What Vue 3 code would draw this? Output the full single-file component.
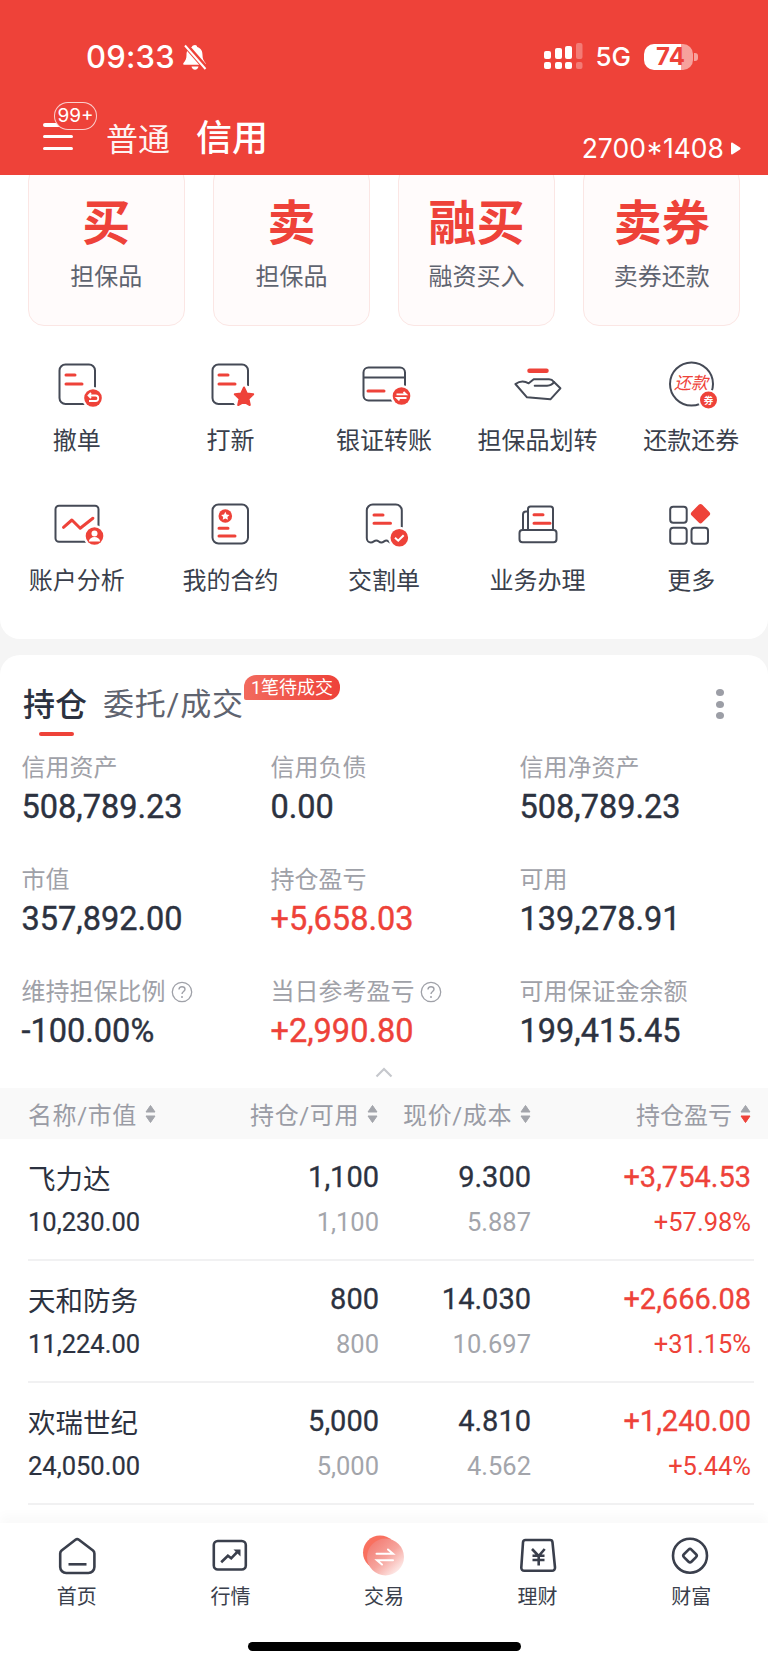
<script setup>
const cards = [
  { title: '买', sub: '担保品' },
  { title: '卖', sub: '担保品' },
  { title: '融买', sub: '融资买入' },
  { title: '卖券', sub: '卖券还款' },
]
const stats = [
  { label: '信用资产', value: '508,789.23' },
  { label: '信用负债', value: '0.00' },
  { label: '信用净资产', value: '508,789.23' },
  { label: '市值', value: '357,892.00' },
  { label: '持仓盈亏', value: '+5,658.03', up: true },
  { label: '可用', value: '139,278.91' },
  { label: '维持担保比例', value: '-100.00%', help: true },
  { label: '当日参考盈亏', value: '+2,990.80', up: true, help: true },
  { label: '可用保证金余额', value: '199,415.45' },
]
const heads = [
  { label: '名称/市值', cls: 'start slash' },
  { label: '持仓/可用', cls: 'slash' },
  { label: '现价/成本', cls: 'slash' },
  { label: '持仓盈亏', active: true },
]
const rows = [
  { name: '飞力达', value: '10,230.00', qty: '1,100', avail: '1,100', price: '9.300', cost: '5.887', pl: '+3,754.53', pct: '+57.98%' },
  { name: '天和防务', value: '11,224.00', qty: '800', avail: '800', price: '14.030', cost: '10.697', pl: '+2,666.08', pct: '+31.15%' },
  { name: '欢瑞世纪', value: '24,050.00', qty: '5,000', avail: '5,000', price: '4.810', cost: '4.562', pl: '+1,240.00', pct: '+5.44%' },
]
</script>

<template>
  <div class="page">
    <header class="top">
      <div class="status">
        <div class="clock">
          <span class="time">09:33</span>
          <svg class="bell" width="26" height="28" viewBox="0 0 26 28">
            <path d="M13 2c1.300 0 2 .9 2.200 1.900C19 5 20.500 8 20.500 12c0 3.500 1 5.500 3 8 .6.800.2 1.800-.8 1.800H2.300c-1 0-1.400-1-.8-1.800 2-2.500 3-4.500 3-8 0-4 1.500-7 5.300-8.100C10 2.900 11.700 2 13 2z" fill="#fff"/>
            <path d="M9.500 23.500h7c-.3 2-1.700 3.200-3.500 3.200s-3.200-1.200-3.500-3.200z" fill="#fff"/>
            <path d="M3 1.500 24.500 26" stroke="#EE4239" stroke-width="5.500"/>
            <path d="M3 2.500 23.500 26" stroke="#fff" stroke-width="2"/>
          </svg>
        </div>
        <div class="sys">
          <svg width="40" height="28" viewBox="0 0 40 28">
            <g fill="#fff">
              <rect x="0" y="8" width="7" height="8" rx="2"/>
              <rect x="11" y="5" width="7" height="11" rx="2"/>
              <rect x="21" y="3" width="7" height="13" rx="2"/>
              <rect x="0" y="19" width="7" height="7" rx="2"/>
              <rect x="11" y="19" width="7" height="7" rx="2"/>
              <rect x="21" y="19" width="7" height="7" rx="2"/>
            </g>
            <g fill="#fff" opacity=".3">
              <rect x="32" y="0" width="6.500" height="16" rx="2"/>
              <rect x="32" y="19" width="6.500" height="7" rx="2"/>
            </g>
          </svg>
          <span class="net">5G</span>
          <div class="battery">
            <div class="cell"><span>74</span></div>
            <i class="nub"></i>
          </div>
        </div>
      </div>
      <div class="topnav">
        <div class="menu">
          <i></i><i></i><i></i>
          <span class="msg">99+</span>
        </div>
        <span class="mode">普通</span>
        <span class="mode on">信用</span>
        <span class="quote">2700*1408</span>
        <svg class="tri" width="11" height="13" viewBox="0 0 11 13"><path d="M1 1.500C1 .5 1.800.2 2.600.7l7.400 4.700c.7.500.7 1.500 0 2l-7.400 4.900c-.8.500-1.600.2-1.600-.8z" fill="#fff"/></svg>
      </div>
    </header>

    <section class="ops">
      <div class="cards">
        <div v-for="c in cards" :key="c.sub" class="card">
          <div class="card-title">{{ c.title }}</div>
          <div class="card-sub">{{ c.sub }}</div>
        </div>
      </div>
      <div class="tools">
        <div class="tool">
          <svg width="60" height="60" viewBox="0 0 60 60">
            <rect class="ln" x="12.500" y="8.500" width="35.500" height="39.500" rx="6"/>
            <path class="bar" d="M19 19h9M19 28h16"/>
            <circle cx="46" cy="42" r="11" fill="#fff"/><circle class="dot" cx="46" cy="42" r="8.800"/>
            <path d="M42 39.500h6.500a2.700 2.700 0 0 1 0 5.500H42M44 37l-2.500 2.500L44 42" fill="none" stroke="#fff" stroke-width="1.800"/>
          </svg>
          <span>撤单</span>
        </div>
        <div class="tool">
          <svg width="60" height="60" viewBox="0 0 60 60">
            <rect class="ln" x="12.500" y="8.500" width="35.500" height="39.500" rx="6"/>
            <path class="bar" d="M19 19h9M19 28h16"/>
            <circle cx="44" cy="41" r="12" fill="#fff"/>
            <path class="dot" stroke="#EE4239" stroke-width="2" stroke-linejoin="round" d="M44 31.500l2.800 6 6.400.8-4.700 4.400 1.300 6.300-5.800-3.200-5.800 3.200 1.300-6.300-4.700-4.400 6.400-.8z"/>
          </svg>
          <span>打新</span>
        </div>
        <div class="tool">
          <svg width="60" height="60" viewBox="0 0 60 60">
            <rect class="ln" x="9.500" y="11.500" width="41.500" height="33" rx="5"/>
            <path class="ln" d="M9.500 21.500H51"/>
            <path class="bar" d="M14 35h16"/>
            <circle cx="47.500" cy="40" r="11" fill="#fff"/><circle class="dot" cx="47.500" cy="40" r="8.800"/>
            <path d="M42.500 38.300h9.500l-2.500-2.300M52.500 42h-9.500l2.500 2.300" fill="none" stroke="#fff" stroke-width="1.800"/>
          </svg>
          <span>银证转账</span>
        </div>
        <div class="tool">
          <svg width="60" height="60" viewBox="0 0 60 60">
            <path class="bar thick" d="M21.500 14.700h17"/>
            <path class="ln" stroke-linecap="round" stroke-linejoin="round" d="M7.400 28Q14 23.500 20.700 27.300L25.700 23.300H41Q44 23.300 46 26L52.400 32.300 42.400 43.300 19 41.300Z"/>
            <path class="ln" stroke-linecap="round" d="M26.700 29.700H39Q44 29.500 46 26"/>
          </svg>
          <span>担保品划转</span>
        </div>
        <div class="tool">
          <svg width="60" height="60" viewBox="0 0 60 60">
            <circle class="ln" cx="30.500" cy="28" r="21.500"/>
            <text x="30" y="33" class="coin">还款</text>
            <circle cx="47.500" cy="44" r="10.500" fill="#fff"/><circle class="dot" cx="47.500" cy="44" r="8.500"/>
            <text x="47.500" y="47.500" class="coin-sm">券</text>
          </svg>
          <span>还款还券</span>
        </div>
        <div class="tool">
          <svg width="60" height="60" viewBox="0 0 60 60">
            <rect class="ln" x="8.500" y="9.800" width="43" height="36" rx="3.500"/>
            <path class="bar" stroke-linejoin="round" d="M16.500 31.300 24.900 24l8.300 8.300 12.700-10"/>
            <circle cx="47.500" cy="40" r="11" fill="#fff"/><circle class="dot" cx="47.500" cy="40" r="8.800"/>
            <circle cx="47.500" cy="37.500" r="3" fill="#fff"/>
            <path d="M41.800 45.500c.5-3 2.800-4.500 5.700-4.500s5.200 1.500 5.700 4.500z" fill="#fff"/>
          </svg>
          <span>账户分析</span>
        </div>
        <div class="tool">
          <svg width="60" height="60" viewBox="0 0 60 60">
            <rect class="ln" x="12.500" y="8.500" width="35.500" height="39" rx="6"/>
            <circle class="dot" cx="25.300" cy="20" r="6.800"/>
            <path d="M25.300 15.800l1.300 2.700 2.900.4-2.100 2 .5 2.900-2.600-1.400-2.600 1.400.5-2.900-2.100-2 2.900-.4z" fill="#fff"/>
            <path class="bar" d="M19 32.300h9M19 40h16"/>
          </svg>
          <span>我的合约</span>
        </div>
        <div class="tool">
          <svg width="60" height="60" viewBox="0 0 60 60">
            <path class="ln" d="M12.800 42V14.500a6 6 0 0 1 6-6h23a6 6 0 0 1 6 6V36M12.800 42c0 3 2 4.500 4 4.500 3 0 3-2 5.500-2s2.500 2 5 2 3-2 5-2 2.500 2 4.500 2"/>
            <path class="bar" d="M20 19h9M20 27.300h16.500"/>
            <circle cx="45.300" cy="41.700" r="11" fill="#fff"/><circle class="dot" cx="45.300" cy="41.700" r="8.800"/>
            <path d="M41 41.700l3.200 3 5.500-5.500" fill="none" stroke="#fff" stroke-width="2"/>
          </svg>
          <span>交割单</span>
        </div>
        <div class="tool">
          <svg width="60" height="60" viewBox="0 0 60 60">
            <path class="ln" d="M20 34V13a2.500 2.500 0 0 1 2.500-2.500h20a2.500 2.500 0 0 1 2.500 2.500v21"/>
            <path class="ln" d="M15 34V18.500a3 3 0 0 1 3-3h2"/>
            <rect class="ln" x="11.500" y="34" width="37" height="12.300" rx="3"/>
            <path class="bar" d="M26 18.700h9M26 27.300h16"/>
          </svg>
          <span>业务办理</span>
        </div>
        <div class="tool">
          <svg width="60" height="60" viewBox="0 0 60 60">
            <rect class="ln" x="9.200" y="10.700" width="16.500" height="16" rx="3"/>
            <rect class="ln" x="9.200" y="31.700" width="16.500" height="16" rx="3"/>
            <rect class="ln" x="30.500" y="31.700" width="16.500" height="16" rx="3"/>
            <rect class="dot" x="32" y="10.200" width="15" height="15" rx="2.500" transform="rotate(45 39.500 17.700)"/>
          </svg>
          <span>更多</span>
        </div>
      </div>
    </section>

    <section class="panel">
      <div class="tabs">
        <div class="tab-on">
          <span>持仓</span>
          <i></i>
        </div>
        <span class="tab">委托/成交</span>
        <span class="pending">1笔待成交</span>
        <div class="more"><i></i><i></i><i></i></div>
      </div>

      <div class="stats">
        <div v-for="s in stats" :key="s.label" class="stat">
          <div class="stat-label">
            {{ s.label }}
            <svg v-if="s.help" width="22" height="22" viewBox="0 0 22 22">
              <circle cx="11" cy="11" r="9.700" fill="none" stroke="#9FA1A8" stroke-width="1.300"/>
              <path d="M8 8.500c0-1.800 1.300-2.800 3-2.800s3 1 3 2.600c0 2.200-3 2.300-3 4.700" fill="none" stroke="#9FA1A8" stroke-width="1.400"/>
              <circle cx="11" cy="16" r="1" fill="#9FA1A8"/>
            </svg>
          </div>
          <div class="stat-value" :class="{ up: s.up }">{{ s.value }}</div>
        </div>
      </div>

      <svg class="fold" width="18" height="11" viewBox="0 0 18 11"><path d="M1.500 9.500 9 2l7.500 7.500" fill="none" stroke="#C6C8CD" stroke-width="2.200"/></svg>

      <div class="thead">
        <div v-for="h in heads" :key="h.label" class="th" :class="h.cls">
          {{ h.label }}
          <svg width="11" height="24" viewBox="0 0 11 24">
            <path d="M5.500 3.500 10 10H1z" fill="#A3A5AB" stroke="#A3A5AB" stroke-linejoin="round"/>
            <path d="M5.500 20.500 10 14H1z" :fill="h.active ? '#EE4239' : '#A3A5AB'" :stroke="h.active ? '#EE4239' : '#A3A5AB'" stroke-linejoin="round"/>
          </svg>
        </div>
      </div>

      <div v-for="r in rows" :key="r.name" class="row">
        <div class="name">{{ r.name }}</div>
        <div class="big">{{ r.qty }}</div>
        <div class="big">{{ r.price }}</div>
        <div class="big up">{{ r.pl }}</div>
        <div class="small dark">{{ r.value }}</div>
        <div class="small">{{ r.avail }}</div>
        <div class="small">{{ r.cost }}</div>
        <div class="small up">{{ r.pct }}</div>
      </div>
    </section>

    <nav class="nav">
      <div class="items">
        <div class="item">
          <svg width="44" height="44" viewBox="0 0 44 44">
            <path class="nl" stroke-linejoin="round" d="M20.500 5.800q1.700-1.300 3.400 0L38 16.500q1.400 1.200 1.400 3V33a6 6 0 0 1-6 6H11.200a6 6 0 0 1-6-6V19.500q0-1.800 1.400-3z"/>
            <path class="nl" d="M13.500 30.300h18"/>
          </svg>
          <span>首页</span>
        </div>
        <div class="item">
          <svg width="44" height="44" viewBox="0 0 44 44">
            <rect class="nl" x="5.800" y="7" width="32" height="28.500" rx="4"/>
            <path class="nl" stroke-width="2.200" d="M13.200 28.300l6.700-6.600 3.300 2.600 6-6.300"/>
            <path d="M25.500 15.500h7v7z" fill="#3A3F4C"/>
          </svg>
          <span>行情</span>
        </div>
        <div class="item">
          <svg width="44" height="44" viewBox="0 0 44 44">
            <defs>
              <linearGradient id="coinFront" x1="0.100" y1="0.100" x2="0.900" y2="0.950">
                <stop offset="0" stop-color="#F37B72"/>
                <stop offset=".5" stop-color="#F6A49D"/>
                <stop offset="1" stop-color="#FFF6F5"/>
              </linearGradient>
            </defs>
            <circle cx="18" cy="18.500" r="17" fill="#F9705F"/>
            <circle cx="23.500" cy="23" r="18.500" fill="url(#coinFront)"/>
            <path d="M14.500 19.800h16.500l-5-4.300M31 26.200H15l5 4.300" fill="none" stroke="#fff" stroke-width="2" stroke-linecap="round"/>
          </svg>
          <span>交易</span>
        </div>
        <div class="item">
          <svg width="44" height="44" viewBox="0 0 44 44">
            <path class="nl" stroke-linejoin="round" d="M9.500 6H34a2.500 2.500 0 0 1 2.500 2.300L39 33.500a3 3 0 0 1-3 3.300H8.300a3 3 0 0 1-3-3.300L7 8.300A2.500 2.500 0 0 1 9.500 6z"/>
            <path class="nl" d="M16 15l6.700 7 6-7M16.500 21.700h12M16.500 26h12M22.700 21.700V31.500"/>
          </svg>
          <span>理财</span>
        </div>
        <div class="item">
          <svg width="44" height="44" viewBox="0 0 44 44">
            <circle class="nl" cx="21" cy="21.700" r="17"/>
            <rect class="nl" x="15.700" y="16.400" width="10.600" height="10.600" rx="2" transform="rotate(45 21 21.700)"/>
          </svg>
          <span>财富</span>
        </div>
      </div>
      <div class="home-bar"></div>
    </nav>
  </div>
</template>

<style scoped>
.page {
  width: 768px;
  height: 1669px;
  overflow: hidden;
  display: flex;
  flex-direction: column;
  background: #F5F5F5;
  color: #2C3240;
  font-family: Roboto, "Noto Sans CJK SC", sans-serif;
}
.top {
  position: relative;
  z-index: 2;
  flex: none;
  height: 175px;
  background: #EE4239;
  color: #fff;
}
.status {
  display: flex;
  justify-content: space-between;
  align-items: center;
  height: 28px;
  padding: 43px 70px 0 86px;
}
.clock, .sys { display: flex; align-items: center; }
.time {
  font: 500 31px/28px Inter, sans-serif;
  letter-spacing: .2px;
}
.bell { margin-left: 7px; }
.sys svg { display: block; }
.net {
  margin-left: 11px;
  font: 500 26px/28px Inter, sans-serif;
}
.battery { display: flex; align-items: center; margin-left: 13px; }
.cell {
  width: 49px;
  height: 26px;
  border-radius: 10px;
  background: linear-gradient(90deg, #fff 76%, rgba(255, 255, 255, .5) 76%);
  color: #EE4239;
  font: 700 24px/26px Inter, sans-serif;
  text-align: center;
}
.cell span { margin-left: 4px; }
.nub {
  width: 4px;
  height: 8px;
  margin-left: 1px;
  background: rgba(255, 255, 255, .5);
  border-radius: 0 3px 3px 0;
}
.topnav {
  display: flex;
  align-items: flex-end;
  height: 55px;
  margin-top: 30px;
  padding: 0 27px 0 43px;
}
.menu {
  position: relative;
  width: 30px;
  height: 27px;
  margin-bottom: 6px;
  display: flex;
  flex-direction: column;
  justify-content: space-between;
}
.menu i { display: block; height: 3.500px; background: #fff; border-radius: 2px; }
.msg {
  position: absolute;
  left: 11px;
  top: -21px;
  width: 43px;
  height: 28px;
  box-sizing: border-box;
  border: 1px solid rgba(255, 255, 255, .75);
  border-radius: 14px;
  background: #EE4239;
  font: 400 19px/26px Inter, sans-serif;
  text-align: center;
}
.mode {
  margin: 0 0 -5px 33px;
  font-size: 32px;
  line-height: 42px;
  color: rgba(255, 255, 255, .95);
}
.mode.on {
  margin: 0 0 -4px 26px;
  font-size: 36px;
  font-weight: 500;
  color: #fff;
}
.quote {
  margin: 0 0 -13px auto;
  font: 400 26.500px/42px Inter, sans-serif;
}
.tri { margin: 0 0 1px 6px; }

.ops {
  flex: none;
  background: #fff;
  border-radius: 0 0 20px 20px;
  padding: 0 28px 2px;
  height: 464px;
  box-sizing: border-box;
}
.cards {
  display: grid;
  grid-template-columns: repeat(4, 1fr);
  column-gap: 28.500px;
  margin-top: -10px;
}
.card {
  height: 161px;
  box-sizing: border-box;
  border: 1px solid #FBE6E4;
  border-radius: 16px;
  background: #FFFBFB;
  padding-top: 33px;
  text-align: center;
}
.card-title {
  font-size: 48px;
  line-height: 50px;
  font-weight: 700;
  color: #EE4239;
}
.card-sub {
  margin-top: 11px;
  font-size: 24px;
  line-height: 34px;
  color: #5F6470;
}
.tools {
  display: grid;
  grid-template-columns: repeat(5, 153.600px);
  margin: 30px 0 0 -28px;
}
.tool {
  height: 140px;
  display: flex;
  flex-direction: column;
  align-items: center;
}
.tool svg { display: block; flex: none; }
.tool span {
  margin-top: 8px;
  font-size: 24px;
  line-height: 34px;
  color: #3A3F4C;
  white-space: nowrap;
}
.ln { fill: none; stroke: #454A56; stroke-width: 2; }
.bar { fill: none; stroke: #EE4239; stroke-width: 3; stroke-linecap: round; }
.bar.thick { stroke-width: 4.500; }
.dot { fill: #EE4239; }
.coin {
  font: italic 400 17px "Noto Sans CJK SC", sans-serif;
  fill: #EE4239;
  text-anchor: middle;
}
.coin-sm {
  font: 700 9.500px "Noto Sans CJK SC", sans-serif;
  fill: #fff;
  text-anchor: middle;
}

.panel {
  flex: none;
  margin-top: 16px;
  background: #fff;
  border-radius: 20px 20px 0 0;
  height: 868px;
}
.tabs {
  position: relative;
  display: flex;
  height: 84px;
  padding: 31px 0 0 23px;
  box-sizing: border-box;
}
.tab-on span {
  display: block;
  font-size: 32px;
  line-height: 38px;
  font-weight: 500;
  color: #2C3240;
}
.tab-on i {
  display: block;
  width: 35px;
  height: 4px;
  margin: 8px 0 0 16px;
  border-radius: 2px;
  background: #EE4239;
}
.tab {
  margin-left: 16px;
  font-size: 31px;
  line-height: 38px;
  letter-spacing: .8px;
  color: #5F6470;
}
.pending {
  position: absolute;
  left: 244px;
  top: 20px;
  height: 25px;
  padding: 0 7px;
  border-radius: 12px 12px 12px 2px;
  background: linear-gradient(90deg, #F26A5E, #EE4239);
  color: #fff;
  font-size: 18px;
  line-height: 25px;
  white-space: nowrap;
}
.more {
  position: absolute;
  right: 44px;
  top: 34px;
  display: flex;
  flex-direction: column;
  gap: 4.500px;
}
.more i {
  display: block;
  width: 8px;
  height: 7px;
  border-radius: 50%;
  background: #9C9EA6;
}
.stats {
  display: grid;
  grid-template-columns: repeat(3, 249px);
  row-gap: 39px;
  margin-top: 13px;
  padding-left: 21.500px;
}
.stat-label {
  display: flex;
  align-items: center;
  gap: 5px;
  font-size: 24px;
  line-height: 32px;
  color: #9FA1A8;
}
.stat-value {
  margin-top: 5px;
  font-size: 32.500px;
  line-height: 36px;
  font-weight: 400;
  -webkit-text-stroke: .4px currentColor;
  color: #2C3240;
}
.up { color: #EE4239 !important; }
.fold {
  display: block;
  margin: 18px auto 0;
}
.thead {
  display: grid;
  grid-template-columns: 198px 152px 153px 220px;
  align-items: center;
  height: 51px;
  margin-top: 10px;
  padding-left: 28px;
  background: #F9F9F9;
}
.th {
  display: flex;
  justify-content: flex-end;
  align-items: center;
  gap: 8px;
  font-size: 24px;
  color: #9A9CA5;
  white-space: nowrap;
}
.th.slash { letter-spacing: .6px; }
.th.start { justify-content: flex-start; }
.row {
  display: grid;
  grid-template-columns: 199px 152px 152px 220px;
  grid-template-rows: 40px 50px;
  align-items: center;
  box-sizing: border-box;
  height: 122px;
  margin: 0 14px 0 28px;
  padding: 18px 3px 0 0;
  border-bottom: 2px solid #F1F1F2;
}
.row > div { text-align: right; white-space: nowrap; }
.row > .name, .row > .dark { text-align: left; }
.name { font-size: 27.500px; color: #2C3240; }
.big {
  font-size: 29px;
  font-weight: 400;
  -webkit-text-stroke: .3px currentColor;
  color: #2C3240;
}
.small { font-size: 25.500px; color: #A3A5AB; }
.small.dark { color: #2C3240; -webkit-text-stroke: .2px currentColor; }

.nav {
  flex: 1;
  position: relative;
  background: #fff;
  box-shadow: 0 -8px 10px rgba(0, 0, 0, .025);
}
.items {
  display: grid;
  grid-template-columns: repeat(5, 153.600px);
  padding-top: 11px;
}
.item {
  display: flex;
  flex-direction: column;
  align-items: center;
  color: #3A3F4C;
  font-size: 20px;
  line-height: 26px;
}
.item svg { display: block; }
.item span { margin-top: 6px; }
.nl { fill: none; stroke: #3A3F4C; stroke-width: 2.600; }
.home-bar {
  width: 273px;
  height: 9px;
  margin: 32px auto 0;
  border-radius: 5px;
  background: #000;
}
</style>
